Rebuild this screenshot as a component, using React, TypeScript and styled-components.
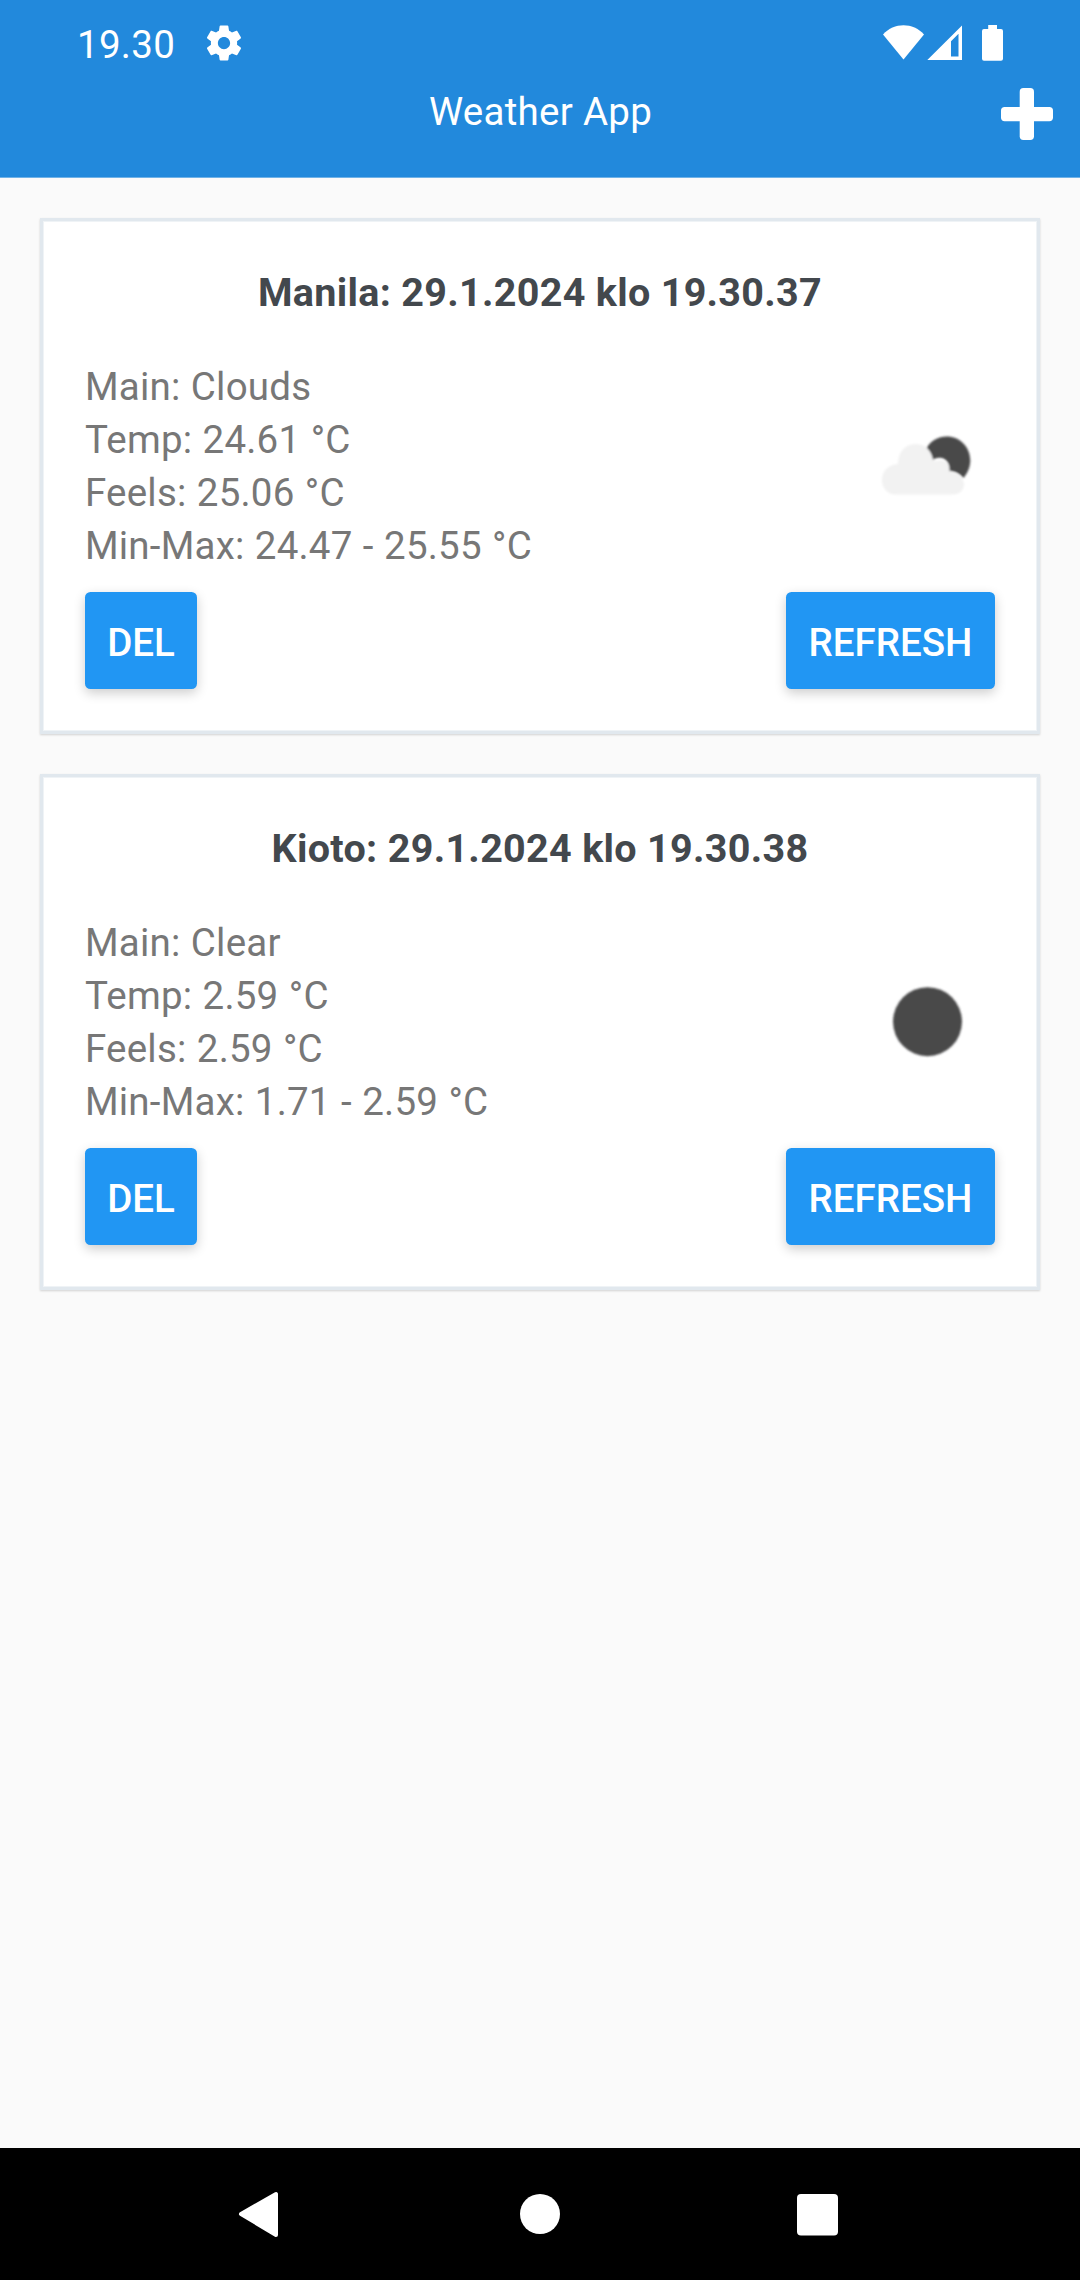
import React from "react";
import styled, { createGlobalStyle } from "styled-components";

const GlobalStyle = createGlobalStyle`
  *, *::before, *::after { box-sizing: border-box; }
  body { margin: 0; background: #fafafa; font-family: Roboto, sans-serif; }
`;

const Screen = styled.div`
  display: flex;
  flex-direction: column;
  width: 1080px;
  height: 2280px;
  background: #fafafa;
  overflow: hidden;
`;

const Header = styled.header`
  height: 178px;
  background: #2289dc;
  border-bottom: 1px solid #70b2e7;
  color: #fff;
`;

const StatusBar = styled.div`
  display: flex;
  align-items: center;
  justify-content: space-between;
  height: 86px;
  padding: 0 77px;
`;

const StatusGroup = styled.div`
  display: flex;
  align-items: center;
`;

const Clock = styled.span`
  width: 126px;
  padding-top: 3px;
  font-size: 38.5px;
  line-height: 46px;
  letter-spacing: 0.3px;
`;

const TitleRow = styled.div`
  display: grid;
  grid-template-columns: 1fr auto 1fr;
  align-items: center;
  height: 54px;
  padding: 0 27px;
`;

const AppTitle = styled.h1`
  grid-column: 2;
  margin: 0;
  padding: 0 0 3px 1px;
  font-size: 38.5px;
  line-height: 49px;
  font-weight: 400;
  letter-spacing: 0.28px;
`;

const AddButton = styled.button`
  justify-self: end;
  display: flex;
  padding: 2px 0 0;
  border: 0;
  background: none;
  color: #fff;
`;

const CardList = styled.main`
  flex: 1;
  display: flex;
  flex-direction: column;
  gap: 40px;
  padding: 40px 40px 0;
`;

const Card = styled.section`
  height: 516px;
  padding: 45px 42px 0;
  border: 3px solid #e1e8ee;
  background: #fff;
  box-shadow: inset 0 0 0 1px #eff3f6, 0 1px 2px rgba(0, 0, 0, 0.16);
`;

const CardTitle = styled.h2`
  margin: 0 0 41px;
  text-align: center;
  color: #43484d;
  font-size: 39.5px;
  line-height: 53px;
  font-weight: 700;
  letter-spacing: 0.31px;
`;

const CardBody = styled.div`
  display: flex;
  align-items: center;
  justify-content: space-between;
`;

const Readings = styled.div`
  display: flex;
  flex-direction: column;
`;

const Reading = styled.span`
  color: #777;
  font-size: 38.5px;
  line-height: 53px;
  letter-spacing: 0.2px;
  word-spacing: 0.6px;
  white-space: nowrap;
`;

const WeatherIcon = styled.svg`
  width: 137px;
  height: 137px;
  flex: none;
`;

const Actions = styled.div`
  display: flex;
  justify-content: space-between;
  margin-top: 20px;
`;

const ActionButton = styled.button<{ $width: number }>`
  width: ${(p) => p.$width}px;
  height: 97px;
  padding: 3px 0 0;
  border: 0;
  border-radius: 5.5px;
  background: #2196f3;
  color: #fff;
  font-family: inherit;
  font-size: 38.5px;
  font-weight: 500;
  line-height: 53px;
  box-shadow: 0 4px 12px rgba(0, 0, 0, 0.2);
`;

const NavBar = styled.nav`
  display: flex;
  align-items: center;
  justify-content: space-between;
  height: 132px;
  padding: 0 230px;
  background: #000;
`;

const NavIcon = styled.svg`
  width: 64px;
  height: 64px;
`;

const SoftEdge = ({ id }: { id: string }) => (
  <filter id={id}>
    <feGaussianBlur stdDeviation="0.8" />
  </filter>
);

const CloudNight = () => (
  <WeatherIcon viewBox="858 397.5 137 137">
    <SoftEdge id="softCloud" />
    <g filter="url(#softCloud)">
      <path
        fill="#f2f2f2"
        d="M895 494C887.500 494 882 487.500 882 479.500C882 470.500 888.500 464 898 463.500C898 452 905 443.500 915.500 443.500C923 443.500 929 447.500 932 454L935 461C944 457 950 463 951 472C958 472 964 478 964 484C964 490 959 494 953 494Z"
      />
      <path
        fill="#48484a"
        d="M926.700 447.200C931 440 938.500 435.900 946.500 435.900C960 435.900 970.300 446.500 970.300 460C970.300 466.500 967.500 473 963.300 477.700C960.500 474 957 471.200 949.500 470.600C950.200 463 946 457.400 939.500 457.200C937 457.200 935 458 933 459.300C932 453.500 929.500 449.700 926.700 447.200Z"
      />
    </g>
  </WeatherIcon>
);

const ClearNight = () => (
  <WeatherIcon viewBox="858 953.5 137 137">
    <SoftEdge id="softClear" />
    <circle cx="927.500" cy="1021.200" r="34.500" fill="#48484a" filter="url(#softClear)" />
  </WeatherIcon>
);

type Weather = {
  title: string;
  readings: string[];
  icon: React.ReactNode;
};

const places: Weather[] = [
  {
    title: "Manila: 29.1.2024 klo 19.30.37",
    readings: ["Main: Clouds", "Temp: 24.61 °C", "Feels: 25.06 °C", "Min-Max: 24.47 - 25.55 °C"],
    icon: <CloudNight />,
  },
  {
    title: "Kioto: 29.1.2024 klo 19.30.38",
    readings: ["Main: Clear", "Temp: 2.59 °C", "Feels: 2.59 °C", "Min-Max: 1.71 - 2.59 °C"],
    icon: <ClearNight />,
  },
];

export default function App() {
  return (
    <>
      <GlobalStyle />
      <Screen>
        <Header>
          <StatusBar>
            <StatusGroup>
              <Clock>19.30</Clock>
              <svg width="42" height="42" viewBox="0 0 24 24" fill="#fff">
                <path d="M19.430 12.980c.04-.32.07-.64.07-.98s-.03-.66-.07-.98l2.110-1.650c.19-.15.24-.42.12-.64l-2-3.460c-.12-.22-.39-.3-.61-.22l-2.490 1c-.52-.4-1.080-.73-1.690-.98l-.38-2.650C14.460 2.180 14.250 2 14 2h-4c-.25 0-.46.18-.49.42l-.38 2.650c-.61.25-1.170.59-1.690.98l-2.490-1c-.23-.09-.49 0-.61.22l-2 3.460c-.13.22-.07.49.12.64l2.110 1.650c-.04.32-.07.65-.07.98s.03.66.07.98l-2.110 1.650c-.19.15-.24.42-.12.64l2 3.460c.12.22.39.3.61.22l2.490-1c.52.4 1.080.73 1.690.98l.38 2.650c.03.24.24.42.49.42h4c.25 0 .46-.18.49-.42l.38-2.650c.61-.25 1.170-.59 1.690-.98l2.490 1c.23.09.49 0 .61-.22l2-3.460c.12-.22.07-.49-.12-.64l-2.110-1.650zM12 15.500c-1.930 0-3.500-1.570-3.500-3.500s1.570-3.500 3.500-3.500 3.500 1.570 3.500 3.500-1.570 3.500-3.500 3.500z" />
              </svg>
            </StatusGroup>
            <svg width="120" height="36" viewBox="883 25 120 36" fill="#fff">
              <path d="M883 34.500C894 22.300 913 22.300 924 34.500L903.500 59.500Z" />
              <path fillRule="evenodd" d="M927.300 60L962 25.500V60ZM951 41.300V56.500H958.500V33.800Z" />
              <path d="M988.200 25H997V29H1001Q1003 29 1003 31V58.700Q1003 60.700 1001 60.700H984Q982 60.700 982 58.700V31Q982 29 984 29H988.200Z" />
            </svg>
          </StatusBar>
          <TitleRow>
            <span />
            <AppTitle>Weather App</AppTitle>
            <AddButton aria-label="Add">
              <svg width="52" height="52" viewBox="0 0 52 52" fill="#fff">
                <rect x="18.700" y="0" width="14.300" height="52" rx="3.700" />
                <rect x="0" y="18.900" width="52" height="14.300" rx="3.700" />
              </svg>
            </AddButton>
          </TitleRow>
        </Header>
        <CardList>
          {places.map((place) => (
            <Card key={place.title}>
              <CardTitle>{place.title}</CardTitle>
              <CardBody>
                <Readings>
                  {place.readings.map((line) => (
                    <Reading key={line}>{line}</Reading>
                  ))}
                </Readings>
                {place.icon}
              </CardBody>
              <Actions>
                <ActionButton $width={112}>DEL</ActionButton>
                <ActionButton $width={209}>REFRESH</ActionButton>
              </Actions>
            </Card>
          ))}
        </CardList>
        <NavBar>
          <NavIcon viewBox="230 2182 64 64">
            <path
              d="M241 2214L276 2194V2235Z"
              fill="#fff"
              stroke="#fff"
              strokeWidth="4"
              strokeLinejoin="round"
            />
          </NavIcon>
          <NavIcon viewBox="508 2182 64 64">
            <circle cx="540" cy="2214" r="20" fill="#fff" />
          </NavIcon>
          <NavIcon viewBox="786 2182 64 64">
            <rect x="797" y="2194" width="41" height="41.500" rx="4" fill="#fff" />
          </NavIcon>
        </NavBar>
      </Screen>
    </>
  );
}
